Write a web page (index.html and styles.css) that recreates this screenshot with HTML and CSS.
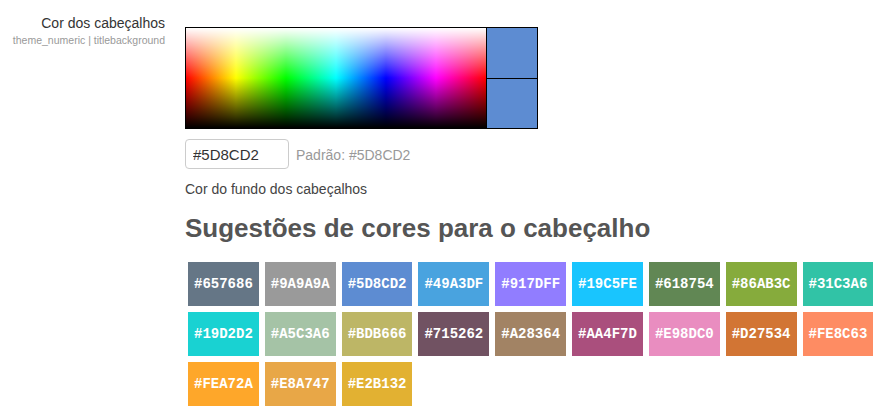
FILE: index.html
```html
<!DOCTYPE html>
<html lang="pt">
<head>
<meta charset="utf-8">
<title>Cor dos cabeçalhos</title>
<link rel="stylesheet" href="styles.css">
</head>
<body>
<div class="row">
  <div class="label-col">
    <div class="label">Cor dos cabeçalhos</div>
    <div class="sublabel">theme_numeric | titlebackground</div>
  </div>
  <div class="field-col">
    <div class="picker">
      <div class="spectrum"></div>
      <div class="preview">
        <div class="preview-new"></div>
        <div class="preview-old"></div>
      </div>
    </div>
    <div class="input-row">
      <input class="hex-input" type="text" value="#5D8CD2">
      <span class="default">Padrão: #5D8CD2</span>
    </div>
    <div class="help">Cor do fundo dos cabeçalhos</div>
    <h2 class="title">Sugestões de cores para o cabeçalho</h2>
    <div class="swatches">
      <span class="swatch" style="background:#657686">#657686</span>
      <span class="swatch" style="background:#9A9A9A">#9A9A9A</span>
      <span class="swatch" style="background:#5D8CD2">#5D8CD2</span>
      <span class="swatch" style="background:#49A3DF">#49A3DF</span>
      <span class="swatch" style="background:#917DFF">#917DFF</span>
      <span class="swatch" style="background:#19C5FE">#19C5FE</span>
      <span class="swatch" style="background:#618754">#618754</span>
      <span class="swatch" style="background:#86AB3C">#86AB3C</span>
      <span class="swatch" style="background:#31C3A6">#31C3A6</span>
      <span class="swatch" style="background:#19D2D2">#19D2D2</span>
      <span class="swatch" style="background:#A5C3A6">#A5C3A6</span>
      <span class="swatch" style="background:#BDB666">#BDB666</span>
      <span class="swatch" style="background:#715262">#715262</span>
      <span class="swatch" style="background:#A28364">#A28364</span>
      <span class="swatch" style="background:#AA4F7D">#AA4F7D</span>
      <span class="swatch" style="background:#E98DC0">#E98DC0</span>
      <span class="swatch" style="background:#D27534">#D27534</span>
      <span class="swatch" style="background:#FE8C63">#FE8C63</span>
      <span class="swatch" style="background:#FEA72A">#FEA72A</span>
      <span class="swatch" style="background:#E8A747">#E8A747</span>
      <span class="swatch" style="background:#E2B132">#E2B132</span>
    </div>
  </div>
</div>
</body>
</html>
```

FILE: styles.css
```css
html, body {
  margin: 0;
  padding: 0;
  background: #fff;
}
body {
  font-family: "Liberation Sans", Arial, sans-serif;
  font-size: 14px;
  color: #333;
}
.row {
  display: grid;
  grid-template-columns: 165px 1fr;
  column-gap: 20px;
  padding-top: 13px;
}
.label-col {
  text-align: right;
}
.label {
  font-size: 14px;
  line-height: 20px;
  color: #333;
}
.sublabel {
  font-size: 10.5px;
  line-height: 14px;
  color: #999;
}
.field-col {
  padding-top: 14px;
}
.picker {
  display: flex;
  width: max-content;
  border: 1px solid #000;
}
.spectrum {
  width: 300px;
  height: 100px;
  border-right: 1px solid #000;
  background:
    linear-gradient(to bottom, #fff 0%, rgba(255,255,255,0) 50%, rgba(0,0,0,0) 50%, #000 100%),
    linear-gradient(to right, #f00 0%, #ff0 16.67%, #0f0 33.33%, #0ff 50%, #00f 66.67%, #f0f 83.33%, #f00 100%);
}
.preview {
  display: flex;
  flex-direction: column;
  width: 50px;
}
.preview-new {
  height: 50px;
  background: #5D8CD2;
}
.preview-old {
  height: 49px;
  border-top: 1px solid #000;
  background: #5D8CD2;
}
.input-row {
  display: flex;
  align-items: baseline;
  margin-top: 10px;
}
.hex-input {
  box-sizing: border-box;
  width: 104px;
  height: 30px;
  padding: 0 7px;
  border: 1px solid #ccc;
  border-radius: 4px;
  font-family: "Liberation Sans", Arial, sans-serif;
  font-size: 15px;
  color: #333;
  background: #fff;
  outline: none;
}
.default {
  margin-left: 7px;
  font-size: 14px;
  color: #999;
}
.help {
  margin-top: 10px;
  line-height: 20px;
  color: #444;
}
.title {
  margin: 15px 0 20px;
  font-size: 26px;
  line-height: 28px;
  font-weight: bold;
  color: #555;
}
.swatches {
  display: flex;
  flex-wrap: wrap;
  gap: 6px;
  margin-left: 3px;
  width: 700px;
}
.swatch {
  display: block;
  height: 44px;
  line-height: 44px;
  padding: 0 6px;
  font-family: "Liberation Mono", "Courier New", monospace;
  font-size: 14px;
  font-weight: bold;
  color: #fff;
}
```
